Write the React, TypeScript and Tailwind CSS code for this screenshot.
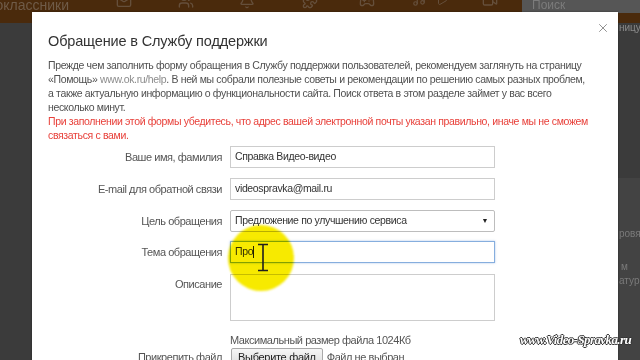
import React from 'react';
import { Mail, Users, Bell, Puzzle, Gamepad2, Music, Play, Video, X } from 'lucide-react';

const font = { fontFamily: '"Liberation Sans", Arial, sans-serif' };

const Row = ({ label, children, className = '' }: { label: string; children: React.ReactNode; className?: string }) => (
  <div className={`flex items-center ${className}`}>
    <div className="w-[190px] text-right text-[11px] tracking-[-0.45px] text-[#555] leading-[14px]">{label}</div>
    <div className="ml-[8px]">{children}</div>
  </div>
);

const inputText = 'text-[10.5px] tracking-[-0.35px] text-[#333]';

export default function App() {
  return (
    <div className="relative w-[640px] h-[360px] overflow-hidden bg-[#3b3b3b]" style={font}>
      {/* page behind the dialog */}
      <div className="flex items-start h-[23px] bg-[#4a2a0c]">
        <div className="w-[69px] flex justify-end whitespace-nowrap -mt-[3px] text-[14px] text-[#6f5b48] leading-[16px]">одноклассники</div>
        <div className="flex items-start -mt-[7px] text-[#654f3b]">
          <Mail size={16} className="ml-[47px]" />
          <Users size={16} className="ml-[46px]" />
          <Bell size={16} className="ml-[45px]" />
          <Puzzle size={16} className="ml-[47px]" />
          <Gamepad2 size={16} className="ml-[41px]" />
          <Music size={14} className="ml-[37px]" />
          <Play size={12} className="ml-[10px] mt-[1px]" />
          <Video size={16} className="ml-[34px]" />
        </div>
        <div className="ml-auto w-[118px] h-[13px] bg-[#565656] pl-[10px] text-[12px] leading-[10px] text-[#7c7c7c]">Поиск</div>
      </div>
      <div className="absolute left-[619px] top-[20px] text-[10px] text-[#8a8a8a]">ницу</div>
      <div className="absolute left-[618px] top-[178px] w-[22px] h-[182px] bg-[#434343]" />
      <div className="absolute left-[619px] top-[226px] text-[10px] text-[#7a7a7a]">ровя</div>
      <div className="absolute left-[621px] top-[259px] text-[10px] text-[#7a7a7a]">м</div>
      <div className="absolute left-[619px] top-[273px] text-[10px] text-[#7a7a7a]">атур</div>

      {/* dialog */}
      <div className="absolute left-[32px] top-[12px] w-[586px] h-[360px] bg-white shadow-[0_0_2px_rgba(0,0,0,0.4)] pl-[16px] pt-[20px]">
        <X size={14} strokeWidth={1.6} className="absolute right-[8px] top-[9px] text-[#8a8a8a]" />
        <div className="text-[14.5px] tracking-[-0.15px] leading-[18px] text-[#333]">Обращение в Службу поддержки</div>
        <p className="mt-[8px] text-[10.5px] tracking-[-0.35px] leading-[14px] text-[#505050] whitespace-nowrap">
          Прежде чем заполнить форму обращения в Службу поддержки пользователей, рекомендуем заглянуть на страницу
          <br />
          «Помощь» <span className="text-[#8c8c8c]">www.ok.ru/help</span>. В ней мы собрали полезные советы и рекомендации по решению самых разных проблем,
          <br />
          а также актуальную информацию о функциональности сайта. Поиск ответа в этом разделе займет у вас всего
          <br />
          несколько минут.
          <br />
          <span className="text-[#e8403a]">
            При заполнении этой формы убедитесь, что адрес вашей электронной почты указан правильно, иначе мы не сможем
            <br />
            связаться с вами.
          </span>
        </p>

        <div className="-ml-[16px] mt-[4px]">
          <Row label="Ваше имя, фамилия">
            <div className={`w-[265px] h-[22px] border border-[#cdcdcd] px-[4px] flex items-center ${inputText}`}>Справка Видео-видео</div>
          </Row>
          <Row label="E-mail для обратной связи" className="mt-[10px]">
            <div className={`w-[265px] h-[22px] border border-[#cdcdcd] px-[4px] flex items-center ${inputText}`}>videospravka@mail.ru</div>
          </Row>
          <Row label="Цель обращения" className="mt-[10px]">
            <div className={`w-[265px] h-[22px] border border-[#bdbdbd] rounded-[2px] px-[4px] flex items-center justify-between ${inputText}`}>
              <span>Предложение по улучшению сервиса</span>
              <span className="text-[7px] text-[#222] mr-[2px]">▼</span>
            </div>
          </Row>
          <Row label="Тема обращения" className="mt-[9px]">
            <div className={`w-[265px] h-[22px] border border-[#86aede] shadow-[0_0_2px_rgba(90,140,210,0.5)] px-[4px] flex items-center ${inputText}`}>
              Про<span className="w-px h-[12px] bg-[#222]" />
            </div>
          </Row>
          <div className="flex items-start mt-[11px]">
            <div className="w-[190px] text-right text-[11px] tracking-[-0.45px] text-[#555] leading-[14px] mt-[3px]">Описание</div>
            <div className="ml-[8px] w-[265px] h-[47px] border border-[#cdcdcd]" />
          </div>
          <div className="ml-[198px] mt-[12px] text-[11px] tracking-[-0.45px] leading-[14px] text-[#555]">Максимальный размер файла 1024Кб</div>
          <div className="flex items-center mt-[1px]">
            <div className="w-[190px] text-right text-[11px] tracking-[-0.45px] text-[#555]">Прикрепить файл</div>
            <div className="ml-[9px] h-[19px] px-[6px] flex items-center border border-[#a9a9a9] rounded-[2px] bg-gradient-to-b from-[#f6f6f6] to-[#dcdcdc] text-[11px] tracking-[-0.3px] text-[#222]">Выберите файл</div>
            <div className="ml-[4px] text-[11px] tracking-[-0.45px] text-[#555]">Файл не выбран</div>
          </div>
        </div>
      </div>

      {/* screen-recording highlight and cursor */}
      <div className="absolute left-[228px] top-[225px] w-[66px] h-[66px] rounded-full bg-[#f7ea00] mix-blend-multiply blur-[1px]" />
      <svg className="absolute left-[256px] top-[243px]" width="14" height="29" viewBox="0 0 14 29">
        <path d="M2 1.5h10M7 1.5v26M2 27.5h10" stroke="#1f1f1f" strokeWidth="1.6" fill="none" />
      </svg>

      <div
        className="absolute left-[520px] top-[330px] text-[13px] font-bold italic tracking-[-0.6px] text-white"
        style={{ fontFamily: '"Liberation Serif", serif', textShadow: '1px 0 0 #333, -1px 0 0 #333, 0 1px 0 #333, 0 -1px 0 #333' }}
      >
        www.Video-Spravka.ru
      </div>
    </div>
  );
}
